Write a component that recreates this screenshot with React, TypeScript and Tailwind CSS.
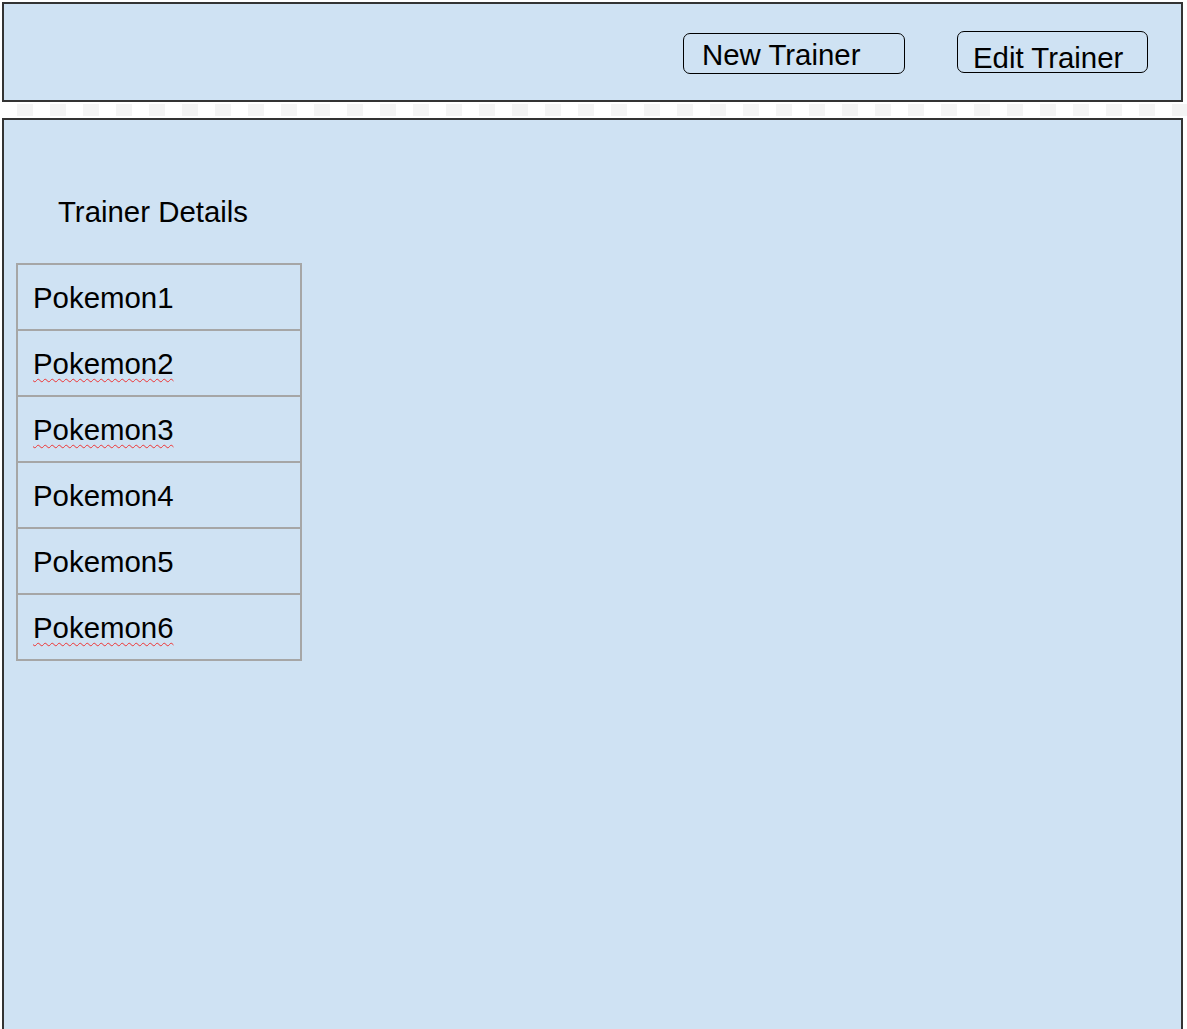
import React from "react";

const pokemons = [
  { name: "Pokemon1", misspelled: false },
  { name: "Pokemon2", misspelled: true },
  { name: "Pokemon3", misspelled: true },
  { name: "Pokemon4", misspelled: false },
  { name: "Pokemon5", misspelled: false },
  { name: "Pokemon6", misspelled: true },
];

export default function App() {
  return (
    <div
      className="w-[1187px] h-[1029px] overflow-hidden bg-white text-black pt-[2px] pl-[2px]"
      style={{ fontFamily: '"Liberation Sans", Arial, sans-serif' }}
    >
      {/* Top bar */}
      <div className="w-[1181px] h-[100px] border-2 border-[#333333] bg-[#cfe2f3] flex justify-end items-start pr-[33px]">
        <div className="mt-[29px] w-[222px] h-[41px] border border-black rounded-[7px] pl-[18px] pt-[6px] text-[29.4px] leading-[29px] whitespace-nowrap">
          New Trainer
        </div>
        <div className="ml-[52px] mt-[27px] w-[191px] h-[42px] border border-black rounded-[7px] pl-[15px] pt-[11px] text-[29.4px] leading-[29px] whitespace-nowrap">
          Edit Trainer
        </div>
      </div>

      {/* Checkered strip */}
      <div className="-ml-[2px] w-[1187px] h-[16px] bg-white pt-[2px]">
        <div className="h-[12px] bg-[repeating-linear-gradient(90deg,#ffffff_0px,#ffffff_17px,#f4f4f4_17px,#f4f4f4_33px)]" />
      </div>

      {/* Main panel */}
      <div className="w-[1181px] h-[960px] border-2 border-[#333333] bg-[#cfe2f3] pt-[77px]">
        <div className="pl-[54px] text-[29.4px] leading-[29px] whitespace-nowrap">
          Trainer Details
        </div>
        <div className="mt-[37px] ml-[12px] w-[286px] border-2 border-b-0 border-[#a6a6a6]">
          {pokemons.map((p) => (
            <div
              key={p.name}
              className="h-[66px] border-b-2 border-[#a6a6a6] pl-[15px] pt-[18px] text-[29.4px] leading-[29px] whitespace-nowrap"
            >
              <span
                className={
                  p.misspelled
                    ? "underline decoration-wavy decoration-[#ee3333] decoration-1 underline-offset-[4px]"
                    : ""
                }
              >
                {p.name}
              </span>
            </div>
          ))}
        </div>
      </div>
    </div>
  );
}
